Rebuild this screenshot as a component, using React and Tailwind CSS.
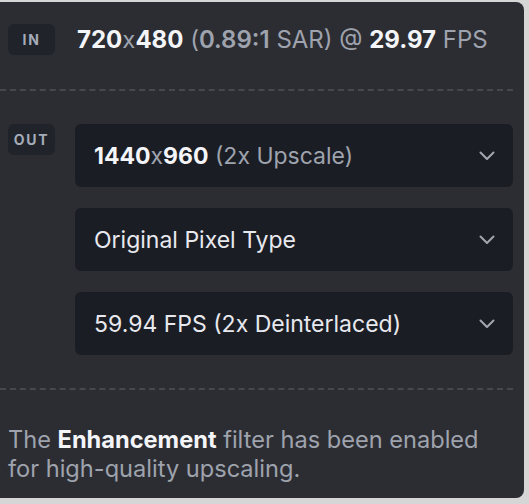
import React from "react";

function Chevron() {
  return (
    <svg width="16" height="10" viewBox="0 0 16 10" fill="none" className="shrink-0">
      <path d="M1.5 1.5 L8 8 L14.5 1.5" stroke="#a3a6b0" strokeWidth="2" strokeLinecap="round" strokeLinejoin="round" />
    </svg>
  );
}

function Select({ children }) {
  return (
    <div className="flex h-[63px] items-center justify-between rounded-md bg-[#1b1d25] pl-[19px] pr-[18px]">
      <div className="text-[23px] leading-[30px] text-[#e8e9ee]">{children}</div>
      <Chevron />
    </div>
  );
}

function Badge({ children }) {
  return (
    <div className="flex h-[31px] w-[47px] shrink-0 items-center justify-center rounded-md bg-[#20232a] text-[14px] font-bold tracking-[0.12em] text-[#a5acb8]">
      {children}
    </div>
  );
}

export default function App() {
  return (
    <div className="min-h-[504px] w-[529px] bg-[#d6d6d6] pt-[2px]" style={{ fontFamily: "Inter, 'Noto Sans', sans-serif" }}>
      <div className="h-[496px] w-[524px] rounded-r-lg bg-[#2c2d33] pr-[11px]">
        <div className="flex items-center gap-[22px] pl-2 pt-[22px]">
          <Badge>IN</Badge>
          <div className="whitespace-nowrap text-[24px] leading-[31px] text-[#9ea3ad]">
            <span className="font-bold text-[#f4f5f8]">720</span>x<span className="font-bold text-[#f4f5f8]">480</span>{" "}
            (<span className="font-semibold">0.89:1</span> SAR) @ <span className="font-bold text-[#f4f5f8]">29.97</span> FPS
          </div>
        </div>
        <div className="mt-[34px] border-t-2 border-dashed border-[#47484f]" />
        <div className="flex gap-5 pl-2 pt-[33px]">
          <Badge>OUT</Badge>
          <div className="flex flex-1 flex-col gap-[21px]">
            <Select>
              <span className="font-bold text-[#f4f5f8]">1440</span>
              <span className="text-[#9ea3ad]">x</span>
              <span className="font-bold text-[#f4f5f8]">960</span>
              <span className="text-[#9ea3ad]"> (2x Upscale)</span>
            </Select>
            <Select>Original Pixel Type</Select>
            <Select>59.94 FPS (2x Deinterlaced)</Select>
          </div>
        </div>
        <div className="mt-[33px] border-t-2 border-dashed border-[#47484f]" />
        <p className="pl-2 pt-[35px] text-[23.6px] leading-[29px] text-[#9ea3ad]">
          The <span className="font-bold text-[#f4f5f8]">Enhancement</span> filter has been enabled
          <br />
          for high-quality upscaling.
        </p>
      </div>
    </div>
  );
}
